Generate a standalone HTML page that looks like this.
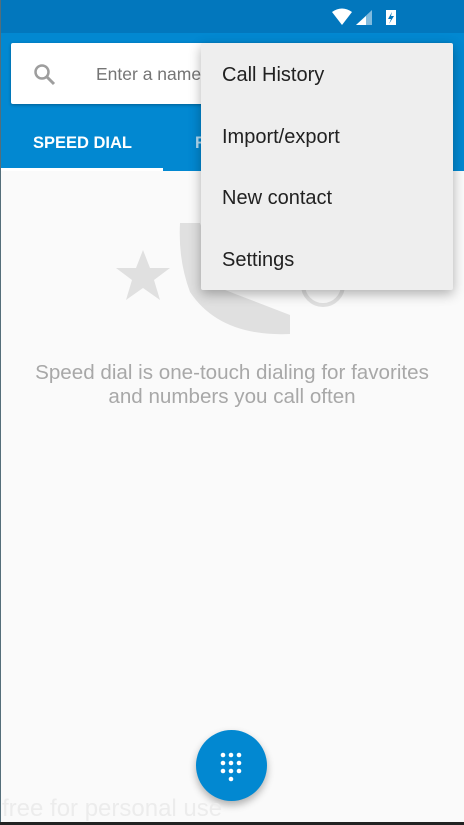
<!DOCTYPE html>
<html><head><meta charset="utf-8"><style>
body{margin:0;width:464px;height:825px;overflow:hidden;background:#fafafa;font-family:"Liberation Sans",Roboto,sans-serif;position:relative}
.sb{position:absolute;left:0;top:0;width:464px;height:33px;background:#0277bd}
.tb{position:absolute;left:0;top:33px;width:464px;height:138px;background:#0288d1}
.search{position:absolute;left:11px;top:43px;width:440px;height:61px;background:#fff;border-radius:2px;box-shadow:0 1px 3px rgba(0,0,0,.3)}
.ph{position:absolute;left:85px;top:21px;font-size:17.5px;color:#757575}
.tab{position:absolute;top:134px;font-size:16.5px;font-weight:bold;color:#fff}
.ul{position:absolute;left:0;top:168px;width:163px;height:3px;background:#fff}
.menu{position:absolute;left:201px;top:43px;width:252px;height:247px;background:#eeeeee;border-radius:2px;box-shadow:0 4px 12px rgba(0,0,0,.3)}
.mi{position:absolute;left:21px;font-size:20px;color:#212121}
.msg{position:absolute;left:0;width:464px;top:361px;text-align:center;font-size:20.6px;line-height:24px;color:#a8a8a8}
.fab{position:absolute;left:196px;top:730px;width:71px;height:71px;border-radius:50%;background:#0288d1;box-shadow:0 4px 8px rgba(0,0,0,.3)}
.wm{position:absolute;left:2px;top:795px;font-size:24px;color:#ececec}
</style></head><body>
<div class="sb">
<svg style="position:absolute;left:330px;top:8px" width="70" height="18"><path d="M2 4 Q12 -3 22 4 L12 17 Z" fill="#fff"/><path d="M26 17 L42 2 L42 17 Z" fill="#fff" opacity=".5"/><path d="M26 17 L36 8 L36 17 Z" fill="#fff"/><rect x="56" y="2" width="10" height="15" fill="#fff"/><path d="M62 4 L58 11 L61 11 L59 16 L64 8 L61 8 Z" fill="#0277bd"/></svg>
</div>
<div class="tb"></div>
<div class="search">
<svg style="position:absolute;left:22px;top:20px" width="24" height="24"><circle cx="9" cy="9" r="6.5" stroke="#9e9e9e" stroke-width="2.5" fill="none"/><path d="M14 14 L21 21" stroke="#9e9e9e" stroke-width="3"/></svg>
<div class="ph">Enter a name</div></div>
<div class="tab" style="left:33px">SPEED DIAL</div>
<div class="tab" style="left:195px;color:#b3dcf3">R</div>
<div class="ul"></div>
<svg style="position:absolute;left:110px;top:220px" width="240" height="120">
<path d="M33 30 L40 48 L60 48 L44 60 L50 80 L33 68 L16 80 L22 60 L6 48 L26 48 Z" fill="#e0e0e0"/>
<path d="M70 3 L90 3 L115 70 L180 95 L180 114 Q110 117 80 72 Q68 40 70 3 Z" fill="#e0e0e0"/>
<circle cx="213" cy="65" r="20" stroke="#e0e0e0" stroke-width="4" fill="none"/>
</svg>
<div class="msg">Speed dial is one-touch dialing for favorites<br>and numbers you call often</div>
<div class="menu">
<div class="mi" style="top:21px">Call History</div>
<div class="mi" style="top:83px">Import/export</div>
<div class="mi" style="top:144px">New contact</div>
<div class="mi" style="top:206px">Settings</div>
</div>
<div class="fab"><svg width="71" height="71">
<g fill="#fff"><circle cx="27" cy="25" r="2.3"/><circle cx="35" cy="25" r="2.3"/><circle cx="43" cy="25" r="2.3"/><circle cx="27" cy="33" r="2.3"/><circle cx="35" cy="33" r="2.3"/><circle cx="43" cy="33" r="2.3"/><circle cx="27" cy="41" r="2.3"/><circle cx="35" cy="41" r="2.3"/><circle cx="43" cy="41" r="2.3"/><circle cx="35" cy="49" r="2.3"/></g></svg></div>
<div class="wm">free for personal use</div>
<div style="position:absolute;left:0;top:0;width:1px;height:825px;background:#546e7a"></div>
<div style="position:absolute;left:0;top:822px;width:464px;height:3px;background:#222"></div>
</body></html>
